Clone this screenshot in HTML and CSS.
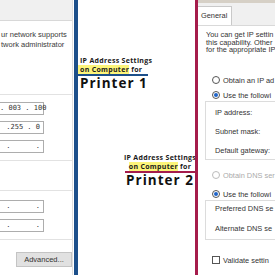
FILE: index.html
```html
<!DOCTYPE html>
<html lang="en">
<head>
    <meta charset="UTF-8">
    <title>IP Address Settings</title>
    <link rel="stylesheet" href="styles.css">
</head>
<body>
    <div class="page">
        <!-- right half of the old dialog -->
        <div class="dlg-left">
            <div class="strip"></div>
            <div class="desc">
                <div>ur network supports</div>
                <div>twork administrator</div>
            </div>
            <div class="group g1">
                <div class="ip">. 003 . 100</div>
                <div class="ip">.255 . 0</div>
                <div class="ip">.&nbsp;&nbsp;&nbsp;&nbsp;&nbsp;&nbsp;.</div>
            </div>
            <div class="group g2">
                <div class="ip">.&nbsp;&nbsp;&nbsp;&nbsp;&nbsp;&nbsp;.</div>
                <div class="ip">.&nbsp;&nbsp;&nbsp;&nbsp;&nbsp;&nbsp;.</div>
            </div>
            <div class="btn-row"><div class="btn">Advanced...</div></div>
        </div>
        <div class="bar blue"></div>

        <div class="middle">
            <div class="tag tag-1">
                <div class="small">IP Address Settings</div>
                <div class="small"><span class="hl">on Computer</span> for</div>
                <div class="rule blue"></div>
                <div class="big">Printer 1</div>
            </div>
            <div class="tag tag-2">
                <div class="small">IP Address Settings</div>
                <div class="small"><span class="hl">on Computer</span> for</div>
                <div class="rule red"></div>
                <div class="big">Printer 2</div>
            </div>
        </div>
        <div class="bar red"></div>

        <!-- left half of the new dialog -->
        <div class="dlg-right">
            <div class="tabs"><div class="tab">General</div></div>
            <div class="body">
                <div class="intro">
                    <div>You can get IP settin</div>
                    <div>this capability. Other</div>
                    <div>for the appropriate IP</div>
                </div>
                <div class="opt o1"><span class="radio"></span>Obtain an IP ad</div>
                <div class="opt o2"><span class="radio on"></span>Use the followi</div>
                <div class="box b1">
                    <div class="lbl">IP address:</div>
                    <div class="lbl">Subnet mask:</div>
                    <div class="lbl">Default gateway:</div>
                </div>
                <div class="opt o3 off"><span class="radio"></span>Obtain DNS ser</div>
                <div class="opt o4"><span class="radio on"></span>Use the followi</div>
                <div class="box b2">
                    <div class="lbl">Preferred DNS se</div>
                    <div class="lbl">Alternate DNS se</div>
                </div>
                <div class="opt o5"><span class="check"></span>Validate settin</div>
            </div>
        </div>
    </div>
</body>
</html>
```
FILE: styles.css
```css
body {
    margin: 0;
    background: #fff;
    font-family: "Liberation Sans", Arial, sans-serif;
    color: #222;
}
.page {
    display: flex;
    width: 275px;
    height: 275px;
    overflow: hidden;
}
.bar {
    flex: none;
    height: 275px;
}
.bar.blue { width: 4px; background: #1c4f8a; }
.bar.red { width: 3px; background: #a51c4b; }

/* left dialog piece */
.dlg-left {
    flex: none;
    width: 73px;
    margin-right: 1px;
    border-right: 1px solid #dedede;
    box-sizing: border-box;
    display: flex;
    flex-direction: column;
    font-size: 7px;
}
.strip {
    height: 20px;
    background: #f0f0f0;
    border-bottom: 1px solid #d8d8d8;
}
.desc {
    margin-top: 9px;
    padding-left: 1px;
    font-size: 7.5px;
    line-height: 10px;
    white-space: nowrap;
    color: #3a3a3a;
}
.group {
    border-top: 1px solid #e2e2e2;
    border-bottom: 1px solid #e2e2e2;
    display: flex;
    flex-direction: column;
    gap: 6px;
}
.g1 { margin-top: 44px; padding: 7px 0 7px; }
.g2 { margin-top: 29px; padding: 9px 0 7px; }
.ip {
    width: 44px;
    height: 13px;
    box-sizing: border-box;
    border: 1px solid #adadad;
    border-left: none;
    text-align: right;
    padding-right: 3px;
    line-height: 11px;
    font-family: "DejaVu Sans Mono", monospace;
    font-size: 7px;
    color: #333;
    white-space: nowrap;
}
.btn-row {
    display: flex;
    justify-content: flex-end;
    margin-top: 12px;
}
.btn {
    width: 56px;
    height: 15px;
    box-sizing: border-box;
    background: #e1e1e1;
    border: 1px solid #c4c4c4;
    text-align: center;
    line-height: 13px;
    font-size: 7.5px;
    color: #333;
}

/* middle labels */
.middle {
    flex: none;
    width: 117px;
    display: flex;
    flex-direction: column;
}
.tag {
    display: flex;
    flex-direction: column;
}
.small {
    font-family: "Open Sans", sans-serif;
    font-weight: 700;
    font-size: 7px;
    line-height: 8.5px;
    letter-spacing: 0.3px;
    color: #1a1a1a;
    white-space: nowrap;
}
.hl { background: #fdf57a; }
.rule { height: 2px; }
.rule.blue { background: #1c4f8a; }
.rule.red { background: #a51c4b; }
.big {
    font-family: "Open Sans", sans-serif;
    font-weight: 700;
    font-size: 13.5px;
    line-height: 15px;
    letter-spacing: 1px;
    color: #111;
    white-space: nowrap;
}
.tag-1 { margin-top: 57px; width: 70px; }
.tag-1 .small, .tag-1 .big { padding-left: 2px; }
.tag-1 .small .hl { margin-left: -2px; padding-left: 2px; }
.tag-2 {
    margin-top: 63px;
    margin-left: 47px;
    width: 70px;
    align-items: center;
}
.tag-2 .rule { align-self: stretch; }

/* right dialog piece */
.dlg-right {
    flex: 1;
    display: flex;
    flex-direction: column;
    font-size: 7.4px;
    white-space: nowrap;
    overflow: hidden;
}
.tabs {
    height: 25px;
    background: #f0f0f0;
    border-top: 3px solid #d6d0c6;
    box-sizing: border-box;
    display: flex;
    align-items: flex-end;
}
.tab {
    width: 34px;
    height: 19px;
    box-sizing: border-box;
    background: #fff;
    border-top: 1px solid #c9c9c9;
    border-right: 1px solid #c9c9c9;
    padding: 4px 0 0 3px;
    color: #333;
}
.body {
    border-top: 1px solid #d9d9d9;
    display: flex;
    flex-direction: column;
    padding-left: 8px;
}
.intro {
    margin-top: 5px;
    line-height: 7.5px;
    color: #333;
}
.opt {
    display: flex;
    align-items: center;
    gap: 3px;
    height: 9px;
    padding-left: 6px;
    color: #333;
}
.opt.off { color: #aaa; }
.o1 { margin-top: 22px; }
.o2 { margin-top: 6px; }
.radio, .check {
    flex: none;
    width: 8px;
    height: 8px;
    box-sizing: border-box;
    border: 1px solid #555;
    border-radius: 50%;
    background: #fff;
    display: flex;
    align-items: center;
    justify-content: center;
}
.radio.on::after {
    content: "";
    width: 4px;
    height: 4px;
    border-radius: 50%;
    background: #1f64c8;
}
.opt.off .radio { border-color: #bbb; }
.check { border-radius: 0; }
.box {
    border: 1px solid #dcdcdc;
    border-right: none;
    margin-left: -1px;
    display: flex;
    flex-direction: column;
    padding-left: 9px;
    color: #333;
    box-sizing: border-box;
}
.b1 { margin-top: 1px; height: 59px; padding-top: 7px; gap: 11px; }
.b2 { margin-top: 1px; height: 40px; padding-top: 4px; gap: 12px; }
.o3 { margin-top: 11px; }
.o4 { margin-top: 10px; }
.o5 { margin-top: 16px; }
.lbl { line-height: 8px; }
```
